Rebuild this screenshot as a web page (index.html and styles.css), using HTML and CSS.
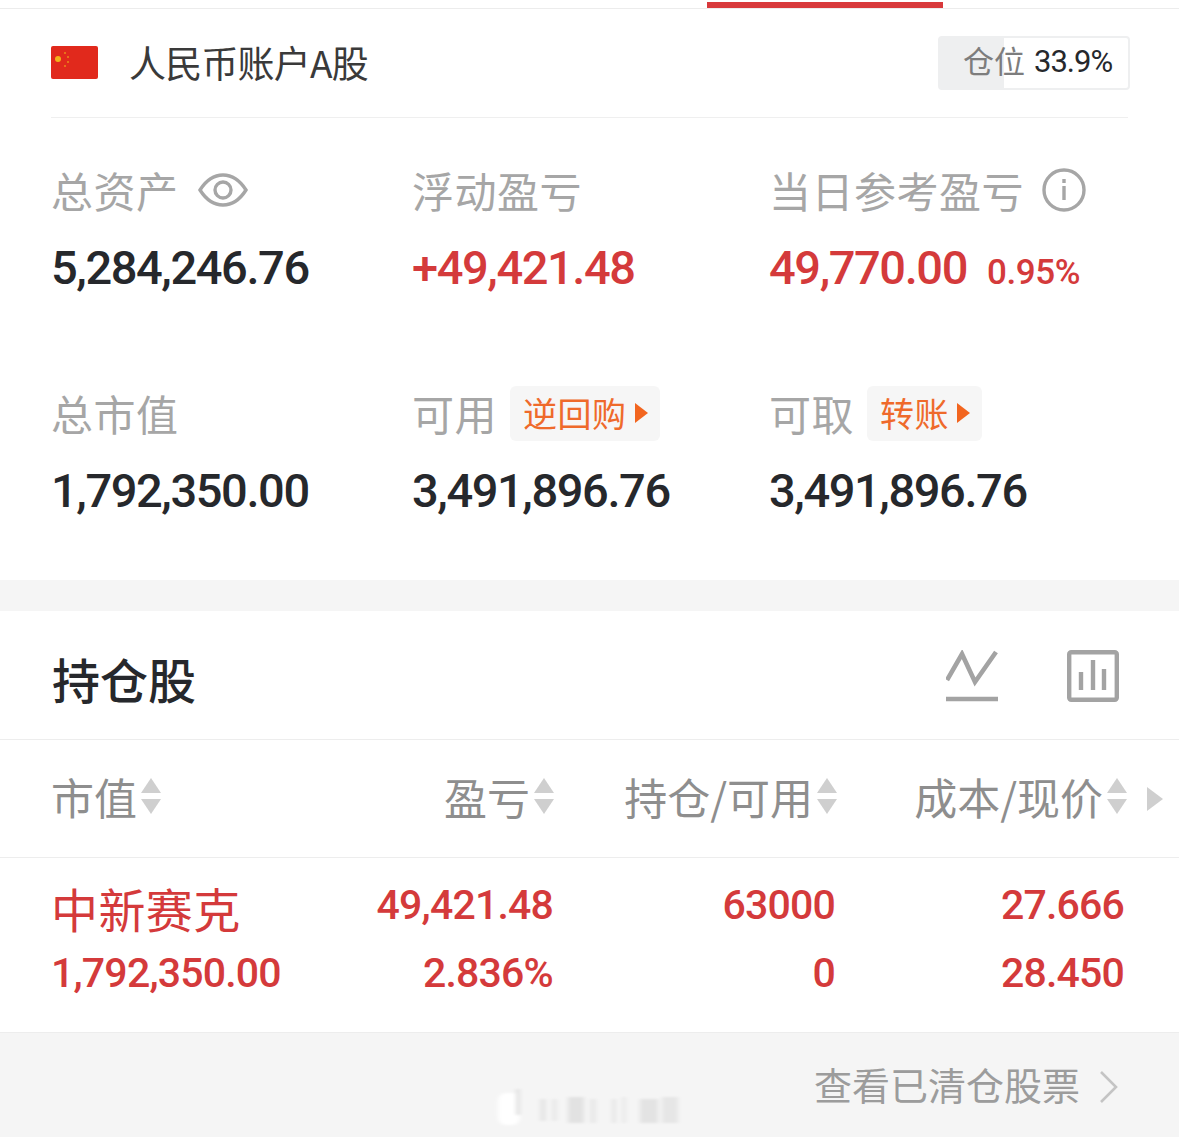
FILE: index.html
```html
<!doctype html>
<html>
<head>
<meta charset="utf-8">
<title>持仓</title>
<link rel="stylesheet" href="styles.css">
</head>
<body>
<div class="tabline"><i></i></div>

<div class="account">
	<div class="acc-head">
		<svg class="flag" viewBox="0 0 47 33">
			<rect width="47" height="33" rx="2" fill="#e1291c"/>
			<circle cx="7" cy="13" r="3" fill="#f3b21a"/>
			<circle cx="14" cy="7" r="1" fill="#ea8a1a"/>
			<circle cx="17" cy="11" r="1" fill="#ea8a1a"/>
			<circle cx="17" cy="16" r="1" fill="#ea8a1a"/>
			<circle cx="14" cy="20" r="1" fill="#ea8a1a"/>
		</svg>
		<span class="acc-name">人民币账户A股</span>
		<div class="ratio"><i class="ratio-fill"></i><span class="ratio-label">仓位</span><b class="ratio-num">33.9%</b></div>
	</div>

	<div class="stats">
		<div class="stat">
			<div class="label">总资产
				<svg class="eye" viewBox="0 0 50 36" fill="none" stroke="#a6a6a6" stroke-width="3.4">
					<path d="M2 18C9 7 16 3 25 3s16 4 23 15c-7 11-14 15-23 15S9 29 2 18z"/>
					<circle cx="25" cy="18" r="8"/>
				</svg>
			</div>
			<div class="num">5,284,246.76</div>
		</div>
		<div class="stat">
			<div class="label">浮动盈亏</div>
			<div class="num red">+49,421.48</div>
		</div>
		<div class="stat">
			<div class="label">当日参考盈亏
				<svg class="info" viewBox="0 0 44 44" fill="none" stroke="#a6a6a6" stroke-width="3.4">
					<circle cx="22" cy="22" r="20"/>
					<path d="M22 18v14M22 11v4"/>
				</svg>
			</div>
			<div class="num red">49,770.00<span class="pct">0.95%</span></div>
		</div>
		<div class="stat">
			<div class="label">总市值</div>
			<div class="num">1,792,350.00</div>
		</div>
		<div class="stat">
			<div class="label">可用<a class="tag" href="#">逆回购<i></i></a></div>
			<div class="num">3,491,896.76</div>
		</div>
		<div class="stat">
			<div class="label">可取<a class="tag" href="#">转账<i></i></a></div>
			<div class="num">3,491,896.76</div>
		</div>
	</div>
</div>

<div class="band"></div>

<div class="hold-head">
	<h2>持仓股</h2>
	<svg class="ico ico-line" viewBox="0 0 52 52" fill="none" stroke="#a3a3a3" stroke-width="4.6">
		<path d="M1 30L16 4l13 28L50 2"/>
		<path d="M0 49h52"/>
	</svg>
	<svg class="ico" viewBox="0 0 52 52" fill="none" stroke="#a3a3a3" stroke-width="4.4">
		<rect x="2.2" y="2.2" width="47.6" height="47.6" rx="2"/>
		<path d="M14 40V22M26 40V10M37 40V19"/>
	</svg>
</div>

<div class="cols">
	<div class="col col-1">市值<i class="sort"></i></div>
	<div class="col col-2">盈亏<i class="sort"></i></div>
	<div class="col col-3">持仓/可用<i class="sort"></i></div>
	<div class="col col-4">成本/现价<i class="sort"></i></div>
	<i class="more"></i>
</div>

<div class="row">
	<div class="col-1">
		<div class="stock">中新赛克</div>
		<div class="cell">1,792,350.00</div>
	</div>
	<div class="col-2 right">
		<div class="cell top">49,421.48</div>
		<div class="cell">2.836%</div>
	</div>
	<div class="col-3 right">
		<div class="cell top">63000</div>
		<div class="cell">0</div>
	</div>
	<div class="col-4 right">
		<div class="cell top">27.666</div>
		<div class="cell">28.450</div>
	</div>
</div>

<div class="foot">
	<span>查看已清仓股票</span>
	<svg class="chev" viewBox="0 0 20 34" fill="none" stroke="#c4c4c4" stroke-width="2.6"><path d="M2 2l15 15L2 32"/></svg>
	<!-- 水印残影 -->
	<svg class="smudge" viewBox="0 0 200 44">
		<defs><filter id="bl"><feGaussianBlur stdDeviation="2 1"/></filter></defs>
		<g filter="url(#bl)">
			<rect x="8" y="6" width="22" height="32" rx="8" fill="#fff"/>
			<rect x="26" y="2" width="4" height="26" fill="#e2e2e2"/>
			<rect x="50" y="12" width="6" height="22" fill="#e6e6e6"/>
			<rect x="62" y="12" width="5" height="22" fill="#e9e9e9"/>
			<rect x="78" y="10" width="16" height="26" fill="#e2e2e2"/>
			<rect x="100" y="12" width="6" height="24" fill="#e8e8e8"/>
			<rect x="122" y="12" width="4" height="24" fill="#e6e6e6"/>
			<rect x="132" y="10" width="4" height="26" fill="#e9e9e9"/>
			<rect x="150" y="12" width="18" height="24" fill="#e3e3e3"/>
			<rect x="172" y="10" width="16" height="26" fill="#e6e6e6"/>
		</g>
	</svg>
</div>
</body>
</html>
```

FILE: styles.css
```css
* {padding:0;margin:0;box-sizing:border-box;}
html,body {background:#fff;}
body {
	width:1179px;
	height:1137px;
	overflow:hidden;
	font-family:"Noto Sans CJK SC","Noto Sans",sans-serif;
	color:#26282c;
}
i {display:block;}

.tabline {
	height:9px;
	border-bottom:1px solid #ececec;
	padding:2px 0 0 707px;
}
.tabline i {
	width:236px;
	height:6px;
	background:#d8393b;
}

.account {padding:0 51px;height:571px;}
.acc-head {
	height:109px;
	border-bottom:1px solid #efefef;
	display:flex;
	align-items:center;
	padding-top:2px;
}
.flag {width:47px;height:33px;margin-top:-4px;}
.acc-name {
	margin:-4px 0 0 31px;
	font-size:37px;
	line-height:40px;
	color:#3a3a3a;
	letter-spacing:-.8px;
}
.ratio {
	position:relative;
	margin:-2px -2px 0 auto;
	width:192px;
	height:54px;
	border:2px solid #eeeff0;
	border-radius:4px;
	display:flex;
	align-items:center;
	padding-left:23px;
}
.ratio-fill {
	position:absolute;
	left:0;
	top:0;
	width:64px;
	height:100%;
	background:#eeeff0;
}
.ratio-label {position:relative;margin-top:-8px;font-size:31px;color:#7d7d7d;}
.ratio-num {
	position:relative;
	margin:-4px 0 0 9px;
	font:400 31px "Roboto",sans-serif;
	letter-spacing:-1px;
	color:#26282c;
}

.stats {
	display:grid;
	grid-template-columns:361px 357px 1fr;
	grid-auto-rows:224px;
	padding-top:43px;
}
.stat:nth-child(n+4) .label {margin:-1px 0 3px;}
.label {
	height:58px;
	display:flex;
	align-items:center;
	font-size:42px;
	line-height:58px;
	letter-spacing:.5px;
	color:#a6a6a6;
}
.eye {width:50px;height:36px;margin-left:19px;}
.info {width:44px;height:44px;margin-left:18px;margin-top:-1px;}
.num {
	margin-top:21px;
	font:500 47px/56px "Roboto",sans-serif;
	letter-spacing:-1.4px;
	color:#26282c;
}
.red {color:#d43a3b;}
.pct {
	margin-left:20px;
	font-size:35px;
	letter-spacing:-.4px;
}
.tag {
	display:flex;
	align-items:center;
	margin-left:13px;
	height:55px;
	padding:0 12px 0 13px;
	border-radius:6px;
	background:#f6f6f6;
	color:#ef6a2b;
	font-size:34px;
	text-decoration:none;
}
.tag i {
	margin-left:8px;
	border-left:13px solid #f2651f;
	border-top:10px solid transparent;
	border-bottom:10px solid transparent;
}

.band {height:31px;background:#f5f5f5;}

.hold-head {
	height:129px;
	border-bottom:1px solid #ededed;
	padding:0 60px 0 52px;
	display:flex;
	align-items:center;
}
.hold-head h2 {
	margin:6px auto 0 0;
	font-size:48px;
	font-weight:500;
	line-height:60px;
	color:#26282c;
}
.ico {width:52px;height:52px;margin-top:2px;}
.ico-line {margin-right:69px;}

.cols {
	position:relative;
	display:flex;
	height:118px;
	border-bottom:1px solid #ededed;
	font-size:43px;
	color:#8e8e8e;
}
.col {display:flex;align-items:center;justify-content:flex-end;padding-bottom:6px;}
.col-1 {width:270px;padding-left:51px;flex:none;}
.col.col-1 {justify-content:flex-start;}
.col-2 {width:285px;flex:none;}
.col-3 {width:283px;flex:none;}
.col-4 {width:290px;flex:none;}
.sort {
	position:relative;
	width:21px;
	height:36px;
	margin-left:4px;
}
.sort:before,.sort:after {
	content:"";
	position:absolute;
	left:0;
	border-left:10.5px solid transparent;
	border-right:10.5px solid transparent;
}
.sort:before {top:0;border-bottom:15px solid #cfcfcf;}
.sort:after {bottom:0;border-top:15px solid #cfcfcf;}
.more {
	margin:auto 0 auto 19px;
	border-left:16px solid #cfcfcf;
	border-top:12px solid transparent;
	border-bottom:12px solid transparent;
}

.row {
	display:flex;
	height:175px;
	border-bottom:1px solid #ededed;
	color:#d43a3b;
}
.right {text-align:right;padding-right:2px;}
.row .col-3 {padding-right:3px;}
.row .col-4 {padding-right:4px;}
.stock {
	font-size:47px;
	line-height:60px;
	margin-top:20px;
	letter-spacing:.4px;
}
.cell {
	font:500 41px/48px "Roboto",sans-serif;
	letter-spacing:-.8px;
	margin-top:11px;
}
.right .cell {margin-top:3px;}
.right .cell.top {margin-top:23px;margin-bottom:20px;}

.foot {
	position:relative;
	height:104px;
	background:#f5f5f5;
	display:flex;
	align-items:center;
	justify-content:flex-end;
	padding-right:60px;
	padding-bottom:4px;
	font-size:38px;
	color:#9c9c9c;
}
.chev {width:20px;height:34px;margin:8px 0 0 19px;}
.smudge {
	position:absolute;
	left:490px;
	top:54px;
	width:200px;
	height:44px;
}
```
